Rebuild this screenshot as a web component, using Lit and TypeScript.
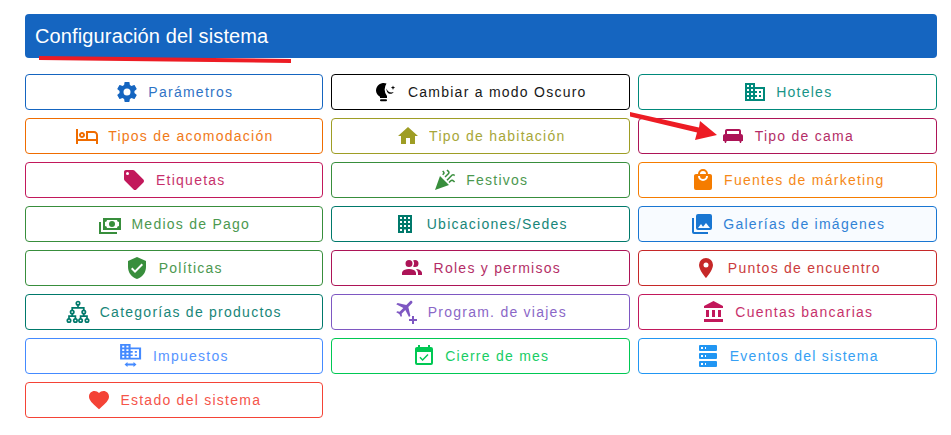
import { LitElement, html, svg, css } from "lit";
import { customElement } from "lit/decorators.js";

const domain = "M18,15H16V17H18M18,11H16V13H18M20,19H12V17H14V15H12V13H14V11H12V9H20M10,7H8V5H10M10,11H8V9H10M10,15H8V13H10M10,19H8V17H10M6,7H4V5H6M6,11H4V9H6M6,15H4V13H6M6,19H4V17H6M12,7V3H2V21H22V7H12Z";
const plane = "M20.56 3.91C21.15 4.5 21.15 5.45 20.56 6.03L16.67 9.92L18.79 19.11L17.38 20.53L13.5 13.1L9.6 17L9.96 19.47L8.89 20.53L7.13 17.35L3.94 15.58L5 14.5L7.5 14.87L11.37 11L3.94 7.09L5.36 5.68L14.55 7.8L18.44 3.91C19 3.33 20 3.33 20.56 3.91Z";

const icons: Record<string, any> = {
    cog: svg`<path d="M12,15.5A3.5,3.5 0 0,1 8.5,12A3.5,3.5 0 0,1 12,8.5A3.5,3.5 0 0,1 15.5,12A3.5,3.5 0 0,1 12,15.5M19.43,12.97C19.47,12.65 19.5,12.33 19.5,12C19.5,11.67 19.47,11.34 19.43,11L21.54,9.37C21.73,9.22 21.78,8.95 21.66,8.73L19.66,5.27C19.54,5.05 19.27,4.96 19.05,5.05L16.56,6.05C16.04,5.66 15.5,5.32 14.87,5.07L14.5,2.42C14.46,2.18 14.25,2 14,2H10C9.75,2 9.54,2.18 9.5,2.42L9.13,5.07C8.5,5.32 7.96,5.66 7.44,6.05L4.95,5.05C4.73,4.96 4.46,5.05 4.34,5.27L2.34,8.73C2.21,8.95 2.27,9.22 2.46,9.37L4.57,11C4.53,11.34 4.5,11.67 4.5,12C4.5,12.33 4.53,12.65 4.57,12.97L2.46,14.63C2.27,14.78 2.21,15.05 2.34,15.27L4.34,18.73C4.46,18.95 4.73,19.03 4.95,18.95L7.44,17.94C7.96,18.34 8.5,18.68 9.13,18.93L9.5,21.58C9.54,21.82 9.75,22 10,22H14C14.25,22 14.46,21.82 14.5,21.58L14.87,18.93C15.5,18.67 16.04,18.34 16.56,17.94L19.05,18.95C19.27,19.03 19.54,18.95 19.66,18.73L21.66,15.27C21.78,15.05 21.73,14.78 21.54,14.63L19.43,12.97Z"/>`,
    night: svg`<path d="M12.5 3.6A7.6 7.6 0 0 0 2 10.6C2 13.2 3.5 15.4 6 16.7V18H13V16A11 11 0 0 1 12.5 3.6Z"/><rect x="6" y="19.2" width="7" height="2" rx="1"/><path d="M12.5 8.5C12 13 16.5 16 19.8 12C16.5 13.2 13.5 12 12.5 8.5Z"/><path d="M19 5.5L19.6 7.1L21.2 7.7L19.6 8.3L19 9.9L18.4 8.3L16.8 7.7L18.4 7.1Z"/>`,
    bedOutline: svg`<path d="M7 14c1.66 0 3-1.34 3-3S8.66 8 7 8s-3 1.34-3 3 1.34 3 3 3zm0-4c.55 0 1 .45 1 1s-.45 1-1 1-1-.45-1-1 .45-1 1-1zm12-3h-8v8H3V5H1v15h2v-3h18v3h2v-9c0-2.21-1.79-4-4-4zm2 8h-8V9h6c1.1 0 2 .9 2 2v4z"/>`,
    home: svg`<path d="M10,20V14H14V20H19V12H22L12,3L2,12H5V20H10Z"/>`,
    domain: svg`<path d="${domain}"/>`,
    bed: svg`<path d="M20 10V7c0-1.1-.9-2-2-2H6c-1.1 0-2 .9-2 2v3c-1.1 0-2 .9-2 2v5h1.33L4 19h1l.67-2h12.67l.66 2h1l.67-2H22v-5c0-1.1-.9-2-2-2zm-2 0H6V7h12v3z"/>`,
    bag: svg`<path d="M12,13A5,5 0 0,1 7,8H9A3,3 0 0,0 12,11A3,3 0 0,0 15,8H17A5,5 0 0,1 12,13M12,3A3,3 0 0,1 15,6H9A3,3 0 0,1 12,3M19,6H17A5,5 0 0,0 12,1A5,5 0 0,0 7,6H5C3.89,6 3,6.89 3,8V20A2,2 0 0,0 5,22H19A2,2 0 0,0 21,20V8C21,6.89 20.1,6 19,6Z"/>`,
    tag: svg`<path d="M5.5,7A1.5,1.5 0 0,1 4,5.5A1.5,1.5 0 0,1 5.5,4A1.5,1.5 0 0,1 7,5.5A1.5,1.5 0 0,1 5.5,7M21.41,11.58L12.41,2.58C12.05,2.22 11.55,2 11,2H4C2.89,2 2,2.89 2,4V11C2,11.55 2.22,12.05 2.59,12.41L11.58,21.41C11.95,21.77 12.45,22 13,22C13.55,22 14.05,21.77 14.41,21.41L21.41,14.41C21.78,14.05 22,13.55 22,13C22,12.44 21.77,11.94 21.41,11.58Z"/>`,
    party: svg`<path d="M14.53 1.45L13.45 2.53L15.05 4.13C15.27 4.36 15.27 4.72 15.05 4.94L11.5 8.5L12.55 9.56L16.11 6C16.92 5.19 16.92 3.89 16.11 3.08L14.53 1.45M10.22 2.5L9.14 3.58L10.05 4.5C10.27 4.71 10.27 5.07 10.05 5.28L9.14 6.2L10.22 7.28L11.14 6.36C11.95 5.55 11.95 4.24 11.14 3.42L10.22 2.5M21.55 6.5C20.74 5.69 19.44 5.69 18.63 6.5L13.45 11.68L14.53 12.76L19.7 7.58C19.92 7.36 20.28 7.36 20.5 7.58L21.05 8.13L22.13 7.07L21.55 6.5M7 8L2 22L16 17L7 8M19.06 11.5C18.25 11.5 17.6 11.8 17 12.4L15.5 13.9L16.56 15L18.06 13.5C18.6 13 19.4 13 19.95 13.5L21.05 14.6L22.13 13.55L21 12.4C20.5 11.8 19.8 11.5 19.06 11.5Z"/>`,
    cash: svg`<path d="M5,6H23V18H5V6M14,9A3,3 0 0,1 17,12A3,3 0 0,1 14,15A3,3 0 0,1 11,12A3,3 0 0,1 14,9M9,8A2,2 0 0,1 7,10V14A2,2 0 0,1 9,16H19A2,2 0 0,1 21,14V10A2,2 0 0,1 19,8H9M1,10H3V20H19V22H1V10Z"/>`,
    office: svg`<path d="M5,3V21H11V17.5H13V21H19V3H5M7,5H9V7H7V5M11,5H13V7H11V5M15,5H17V7H15V5M7,9H9V11H7V9M11,9H13V11H11V9M15,9H17V11H15V9M7,13H9V15H7V13M11,13H13V15H11V13M15,13H17V15H15V13M7,17H9V19H7V17M15,17H17V19H15V17Z"/>`,
    images: svg`<path d="M22,16V4A2,2 0 0,0 20,2H8A2,2 0 0,0 6,4V16A2,2 0 0,0 8,18H20A2,2 0 0,0 22,16M11,12L13.03,14.71L16,11L20,16H8M2,6V20A2,2 0 0,0 4,22H18V20H4V6"/>`,
    shield: svg`<path d="M10,17L6,13L7.41,11.59L10,14.17L16.59,7.58L18,9M12,1L3,5V11C3,16.55 6.84,21.74 12,23C17.16,21.74 21,16.55 21,11V5L12,1Z"/>`,
    people: svg`<path d="M16 17V19H2V17S2 13 9 13 16 17 16 17M12.5 7.5A3.5 3.5 0 1 0 9 11A3.5 3.5 0 0 0 12.5 7.5M15.94 13A5.32 5.32 0 0 1 18 17V19H22V17S22 13.37 15.94 13M15 4A3.39 3.39 0 0 0 13.07 4.59A5 5 0 0 1 13.07 10.41A3.39 3.39 0 0 0 15 11A3.5 3.5 0 0 0 15 4Z"/>`,
    marker: svg`<path d="M12,11.5A2.5,2.5 0 0,1 9.5,9A2.5,2.5 0 0,1 12,6.5A2.5,2.5 0 0,1 14.5,9A2.5,2.5 0 0,1 12,11.5M12,2A7,7 0 0,0 5,9C5,14.25 12,22 12,22C12,22 19,14.25 19,9A7,7 0 0,0 12,2Z"/>`,
    tree: svg`<g fill="none" stroke="currentColor" stroke-width="1.7"><circle cx="12" cy="3.2" r="1.7"/><circle cx="6.2" cy="12" r="1.7"/><circle cx="17.8" cy="12" r="1.7"/><circle cx="3" cy="20.5" r="1.7"/><circle cx="9.4" cy="20.5" r="1.7"/><circle cx="14.6" cy="20.5" r="1.7"/><circle cx="21" cy="20.5" r="1.7"/><path d="M12 5V7.8M6.2 10.3V7.8H17.8V10.3M6.2 13.7V16.2M3 18.8V16.2H9.4V18.8M17.8 13.7V16.2M14.6 18.8V16.2H21V18.8"/></g>`,
    planePlus: svg`<g transform="translate(-1.5 -2.5) scale(.95)"><path d="${plane}"/></g><path d="M18 16H20V19H23V21H20V24H18V21H15V19H18Z"/>`,
    bank: svg`<path d="M11.5,1L2,6V8H21V6M16,10V17H19V10M2,22H21V19H2M10,10V17H13V10M4,10V17H7V10H4Z"/>`,
    taxes: svg`<g transform="translate(-1 -2.5) scale(1.05 .86)"><path d="${domain}"/></g><path d="M5.5 20.5L8.5 18V19.6H14.5V18L17.5 20.5L14.5 23V21.4H8.5V23Z"/>`,
    calendar: svg`<path d="M19,19H5V8H19M19,3H18V1H16V3H8V1H6V3H5C3.89,3 3,3.9 3,5V19A2,2 0 0,0 5,21H19A2,2 0 0,0 21,19V5A2,2 0 0,0 19,3M16.53,11.06L15.47,10L10.59,14.88L8.47,12.76L7.41,13.82L10.59,17L16.53,11.06Z"/>`,
    server: svg`<path d="M4,1H20A1,1 0 0,1 21,2V6A1,1 0 0,1 20,7H4A1,1 0 0,1 3,6V2A1,1 0 0,1 4,1M4,9H20A1,1 0 0,1 21,10V14A1,1 0 0,1 20,15H4A1,1 0 0,1 3,14V10A1,1 0 0,1 4,9M4,17H20A1,1 0 0,1 21,18V22A1,1 0 0,1 20,23H4A1,1 0 0,1 3,22V18A1,1 0 0,1 4,17M9,5H10V3H9V5M9,13H10V11H9V13M9,21H10V19H9V21M5,3V5H7V3H5M5,11V13H7V11H5M5,19V21H7V19H5Z"/>`,
    heart: svg`<path d="M12,21.35L10.55,20.03C5.4,15.36 2,12.27 2,8.5C2,5.41 4.42,3 7.5,3C9.24,3 10.91,3.81 12,5.08C13.09,3.81 14.76,3 16.5,3C19.58,3 22,5.41 22,8.5C22,12.27 18.6,15.36 13.45,20.03L12,21.35Z"/>`,
};

// label, icon, colour, tinted background
const buttons: [string, string, string, boolean?][] = [
    ["Parámetros", "cog", "#1565c0"],
    ["Cambiar a modo Oscuro", "night", "#000000"],
    ["Hoteles", "domain", "#00897b"],
    ["Tipos de acomodación", "bedOutline", "#ef6c00"],
    ["Tipo de habitación", "home", "#9e9d24"],
    ["Tipo de cama", "bed", "#ad1457"],
    ["Etiquetas", "tag", "#c2185b"],
    ["Festivos", "party", "#388e3c"],
    ["Fuentes de márketing", "bag", "#f57c00"],
    ["Medios de Pago", "cash", "#388e3c"],
    ["Ubicaciones/Sedes", "office", "#00796b"],
    ["Galerías de imágenes", "images", "#1976d2", true],
    ["Políticas", "shield", "#388e3c"],
    ["Roles y permisos", "people", "#ad1457"],
    ["Puntos de encuentro", "marker", "#c62828"],
    ["Categorías de productos", "tree", "#00796b"],
    ["Program. de viajes", "planePlus", "#7e57c2"],
    ["Cuentas bancarias", "bank", "#c2185b"],
    ["Impuestos", "taxes", "#448aff"],
    ["Cierre de mes", "calendar", "#00c853"],
    ["Eventos del sistema", "server", "#2196f3"],
    ["Estado del sistema", "heart", "#f44336"],
];

@customElement("app-root")
export class AppRoot extends LitElement {
    static styles = css`
        :host {
            display: block;
            position: relative;
            height: 435px;
            overflow: hidden;
            background: #fff;
            font-family: "Liberation Sans", Arial, sans-serif;
        }

        .page {
            padding: 14px 14px 0 25px;
        }

        .title {
            height: 44px;
            display: flex;
            align-items: center;
            padding: 0 10px;
            margin-bottom: 16px;
            border-radius: 4px;
            background: #1565c0;
            color: #fff;
            font-size: 20px;
            letter-spacing: 0.13px;
        }

        .grid {
            display: grid;
            grid-template-columns: 298px 299px 299px;
            gap: 8px;
        }

        .btn {
            height: 36px;
            box-sizing: border-box;
            display: flex;
            align-items: center;
            justify-content: center;
            gap: 9.6px;
            border: 1px solid currentColor;
            border-radius: 4px;
            background: #fff;
            font-size: 14px;
            letter-spacing: 1.25px;
            white-space: nowrap;
        }

        .btn span {
            opacity: 0.9;
        }

        .btn.tint {
            background: #f8fbff;
        }

        .btn svg {
            width: 24px;
            height: 24px;
            flex: none;
            fill: currentColor;
        }

        .marks {
            position: absolute;
            inset: 0;
            width: 100%;
            height: 100%;
            pointer-events: none;
        }
    `;

    render() {
        return html`
            <div class="page">
                <div class="title">Configuración del sistema</div>
                <div class="grid">
                    ${buttons.map(([label, icon, color, tint]) => html`
                        <div class="btn ${tint ? "tint" : ""}" style="color: ${color}">
                            <svg viewBox="0 0 24 24">${icons[icon]}</svg>
                            <span>${label}</span>
                        </div>
                    `)}
                </div>
            </div>
            <svg class="marks" viewBox="0 0 951 435">
                <path d="M39 56L291 59V63L39 60Z" fill="#ed1c24"/>
                <path d="M630 112L699 127.5L700 121L717 135L695 140L697 132.5L630 116.5Z" fill="#ed1c24"/>
            </svg>
        `;
    }
}
